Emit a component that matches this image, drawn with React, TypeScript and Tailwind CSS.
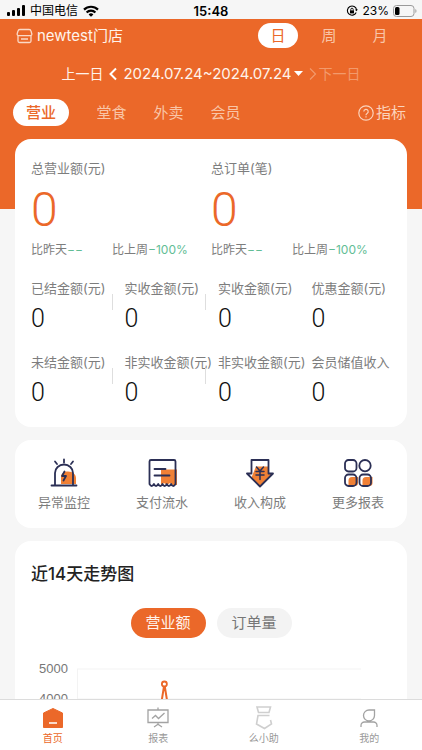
import { useState } from "react";
import type { ReactNode } from "react";

const periods = ["日", "周", "月"];
const channels = ["营业", "堂食", "外卖", "会员"];

const totals = [
  { label: "总营业额(元)", value: "0" },
  { label: "总订单(笔)", value: "0" },
];

const metrics = [
  { label: "已结金额(元)", divider: true },
  { label: "实收金额(元)", divider: true },
  { label: "实收金额(元)", divider: false },
  { label: "优惠金额(元)", divider: false },
  { label: "未结金额(元)", divider: true },
  { label: "非实收金额(元)", divider: true },
  { label: "非实收金额(元)", divider: false },
  { label: "会员储值收入", divider: false },
];

const trend = [0, 0, 0, 0, 4500, 0, 0, 0, 0, 0, 0, 0, 0, 0];
const ticks = [5000, 4000, 3000, 2000, 1000, 0];

function StatusBar() {
  return (
    <div className="grid h-[19px] shrink-0 grid-cols-3 items-center bg-[#f6f6f6] pt-[2px] text-black">
      <div className="flex items-center gap-[5px] pl-[7px]">
        <svg width="18" height="11" viewBox="0 0 18 11" fill="currentColor">
          <rect x="0" y="7" width="3" height="4" rx="1" />
          <rect x="5" y="5" width="3" height="6" rx="1" />
          <rect x="10" y="3" width="3" height="8" rx="1" />
          <rect x="15" y="0" width="3" height="11" rx="1" />
        </svg>
        <span className="text-[12px] leading-4">中国电信</span>
        <svg width="16" height="12" viewBox="0 0 16 12" fill="none" stroke="currentColor" strokeWidth="2.2">
          <path d="M1 4.6a10 10 0 0 1 14 0" />
          <path d="M3.6 7.4a6.2 6.2 0 0 1 8.8 0" />
          <path d="M8 11.8 5.6 9.4a3.4 3.4 0 0 1 4.8 0z" fill="currentColor" stroke="none" />
        </svg>
      </div>
      <div className="text-center text-[13px] leading-4 font-semibold">15:48</div>
      <div className="flex items-center justify-end gap-1 pr-[5px]">
        <svg width="12" height="12" viewBox="0 0 12 12" fill="none" stroke="currentColor" strokeWidth="1.1">
          <path d="M10.2 7.6A4.6 4.6 0 1 1 10.6 5" />
          <path d="m8.9 4.7 1.7 1.5 1.2-1.9z" fill="currentColor" stroke="none" />
          <rect x="4" y="5.4" width="4" height="3" fill="currentColor" stroke="none" />
          <path d="M4.8 5.6V4.4a1.2 1.2 0 0 1 2.4 0v1.2" strokeWidth="0.9" />
        </svg>
        <span className="text-[12px] leading-4">23%</span>
        <svg width="24" height="12" viewBox="0 0 24 12" fill="none">
          <rect x="0.5" y="0.5" width="20.5" height="11" rx="3" stroke="#9a9a9a" />
          <rect x="2" y="2" width="4.5" height="8" rx="1.5" fill="#000" />
          <path d="M22.4 4v4c1.4-.6 1.4-3.400 0-4z" fill="#9a9a9a" />
        </svg>
      </div>
    </div>
  );
}

function AlarmIcon() {
  return (
    <svg width="30" height="30" viewBox="0 0 30 30" fill="none" stroke="#2b2f55" strokeWidth="1.800" strokeLinecap="round" strokeLinejoin="round">
      <path d="M12 26V18a6.500 6.500 0 0 1 7-4.500c5 0 8 3 8 6.500v6z" fill="#f08035" stroke="none" />
      <path d="M6 26.500V15a9 8.500 0 0 1 18 0v11.500M2.500 27.500h25" />
      <path d="M15 1.500v3M6 3.500 8 6M24 3.500 22 6" />
      <path d="m15.500 13.500-2.500 4.500h4l-2.500 4.500" />
    </svg>
  );
}

function ReceiptIcon() {
  return (
    <svg width="30" height="30" viewBox="0 0 30 30" fill="none" stroke="#2b2f55" strokeWidth="1.800" strokeLinecap="round" strokeLinejoin="round">
      <path d="M14 11.500h16v15.500h-4l-3-2-3 2-3-2-3 2z" fill="#f08035" stroke="none" />
      <path d="M2.500 26V3.500a1.500 1.500 0 0 1 1.500-1.500h23a1.500 1.500 0 0 1 1.500 1.500V26q-2.200 4-4.400 0-2.200 4-4.300 0-2.200 4-4.300 0-2.200 4-4.300 0-2.200 4-4.300 0-2.200 4-4.400 0z" />
      <path d="M7.500 11h11M7.500 17.500h15" />
    </svg>
  );
}

function IncomeIcon() {
  return (
    <svg width="30" height="30" viewBox="0 0 30 30" fill="none" stroke="#2b2f55" strokeWidth="1.800" strokeLinecap="round" strokeLinejoin="round">
      <path d="M11 8.500h12.500v7h4.500L15 28.500 6 20.500z" fill="#f08035" stroke="none" />
      <path d="M6.500 2h17v13.500h4.500L15 28.500 2 15.500h4.500z" />
      <path d="m11.500 9 3.500 4 3.500-4M11 13.500h8M11 17h8M15 13v8.500" strokeWidth="1.500" />
    </svg>
  );
}

function MoreIcon() {
  return (
    <svg width="30" height="30" viewBox="0 0 30 30" fill="none" stroke="#2b2f55" strokeWidth="1.800">
      <path d="M5.500 28v-5.500a3.500 3.500 0 0 1 3.500-3.500h6V25a3 3 0 0 1-3 3zM19.500 28v-5.500a3.500 3.500 0 0 1 3.500-3.500h6.500V25a3 3 0 0 1-3 3z" fill="#f08035" stroke="none" />
      <rect x="2" y="2" width="11.500" height="11.500" rx="3.500" />
      <circle cx="22" cy="7.700" r="5.700" />
      <rect x="2" y="16.500" width="11.500" height="11.500" rx="3.500" />
      <rect x="16.500" y="16.500" width="11.500" height="11.500" rx="3.500" />
    </svg>
  );
}

const shortcuts: { label: string; icon: ReactNode }[] = [
  { label: "异常监控", icon: <AlarmIcon /> },
  { label: "支付流水", icon: <ReceiptIcon /> },
  { label: "收入构成", icon: <IncomeIcon /> },
  { label: "更多报表", icon: <MoreIcon /> },
];

const navItems: { label: string; icon: ReactNode; active?: boolean }[] = [
  {
    label: "首页",
    active: true,
    icon: (
      <svg width="24" height="24" viewBox="0 0 24 24">
        <path d="M12 2.500 21.500 7v14.500h-19V7z" fill="#eb6829" stroke="#eb6829" strokeLinejoin="round" />
        <path d="M8 17h8" stroke="#fff" strokeWidth="1.500" />
      </svg>
    ),
  },
  {
    label: "报表",
    icon: (
      <svg width="24" height="24" viewBox="0 0 24 24" fill="none" stroke="#a3a3a3" strokeWidth="1.300">
        <path d="M2 4h20v12.500H2zM12 1.500V4M12 16.500v2M8 21l4-2.700 4 2.700" />
        <path d="m6 12.500 3.500-3 3 3L18.500 7" />
      </svg>
    ),
  },
  {
    label: "么小助",
    icon: (
      <svg width="24" height="24" viewBox="0 0 24 24" fill="none" stroke="#cfcfcf" strokeWidth="1.600">
        <path d="M5 1h13.500l-1.500 5.500H6.500zM17.500 9.500H6L4.500 18l8 4.500 7-4.500-1-4" />
      </svg>
    ),
  },
  {
    label: "我的",
    icon: (
      <svg width="24" height="24" viewBox="0 0 24 24" fill="none" stroke="#a3a3a3" strokeWidth="1.300">
        <path d="M17.500 4h-5.500a5.500 5.500 0 1 0 5.500 5.500zM4 21v-1.500a3.500 3.500 0 0 1 3.500-3.500h9a3.500 3.500 0 0 1 3.500 3.500V21" />
      </svg>
    ),
  },
];

function TrendChart() {
  const width = 284;
  const height = 150;
  const points = trend.map((v, i) => [
    (i * width) / (trend.length - 1),
    height - (v / 5000) * height + 1,
  ]);
  return (
    <div className="mt-[22px] flex gap-[9px] pl-4">
      <div className="w-[37px] text-right font-['Liberation_Sans',sans-serif] text-[13px] text-[#777]">
        {ticks.map((t) => (
          <div key={t} className="h-[30px] leading-[18px]">{t}</div>
        ))}
      </div>
      <svg className="mt-2 overflow-visible" width={width} height={height + 4}>
        {ticks.map((t, i) => (
          <path key={t} d={`M0 ${i * 30 + 1}H${width}`} stroke="#f3f3f3" />
        ))}
        <path d={`M0.500 1V${height}`} stroke="#f3f3f3" />
        <polyline points={points.map((p) => p.join(",")).join(" ")} fill="none" stroke="#eb6829" strokeWidth="2" strokeLinejoin="bevel" />
        {points.map(([x, y]) => (
          <circle key={x} cx={x} cy={y} r="2.500" fill="#fff" stroke="#eb6829" strokeWidth="1.800" />
        ))}
      </svg>
    </div>
  );
}

export default function App() {
  const [period, setPeriod] = useState("日");
  const [channel, setChannel] = useState("营业");
  const [series, setSeries] = useState("营业额");

  return (
    <div className="flex h-screen flex-col bg-[#f6f6f6] font-['Inter','Noto_Sans_CJK_SC',sans-serif] text-[#7d7d7d]">
      <StatusBar />
      <main className="min-h-0 flex-1 overflow-y-auto [scrollbar-width:none]">
        <header className="bg-[#eb6829] pt-1 pb-[83px] text-[#fff3eb]">
          <div className="flex h-[25px] items-center justify-between pr-[22px] pl-4">
            <h1 className="flex items-center gap-1 text-[15px] leading-5">
              <svg width="17" height="16" viewBox="0 0 17 16" fill="none" stroke="#fbd9c6" strokeWidth="1.300">
                <path d="M4 1.500h9a2 2 0 0 1 2 1.500l.8 2.700a1.500 1.500 0 0 1-1.500 1.900H2.700a1.500 1.500 0 0 1-1.500-1.900L2 3a2 2 0 0 1 2-1.500z" />
                <path d="M2 7.600V13a1.500 1.500 0 0 0 1.500 1.500h10A1.500 1.500 0 0 0 15 13V7.600M5 11h7" />
              </svg>
              newtest门店
            </h1>
            <div className="flex items-center gap-[11px]">
              {periods.map((p) => (
                <button
                  key={p}
                  onClick={() => setPeriod(p)}
                  className={
                    p === period
                      ? "h-[25px] w-10 rounded-full bg-white text-[15px] leading-5 text-[#eb6829]"
                      : "h-[25px] w-10 rounded-full text-[15px] leading-5 text-[#f9c5a7]"
                  }
                >
                  {p}
                </button>
              ))}
            </div>
          </div>

          <div className="mt-3 flex h-[27px] items-center justify-center text-[14px] leading-5">
            <button className="flex items-center gap-[6px]">
              上一日
              <svg width="8" height="14" viewBox="0 0 8 14" fill="none" stroke="#fff" strokeWidth="2">
                <path d="M7 1.500 1.500 7 7 12.500" />
              </svg>
            </button>
            <button className="ml-[6px] flex items-center gap-[2px]">
              <span className="text-[15px]">2024.07.24~2024.07.24</span>
              <svg width="9" height="5" viewBox="0 0 9 5" fill="#fff">
                <path d="M0 0h9L4.500 5z" />
              </svg>
            </button>
            <button className="ml-[6px] flex items-center gap-[2px] text-[#f29a6c]">
              <svg width="8" height="14" viewBox="0 0 8 14" fill="none" stroke="currentColor" strokeWidth="1.200">
                <path d="M1 1.500 6.500 7 1 12.500" />
              </svg>
              下一日
            </button>
          </div>

          <div className="mt-3 flex h-[27px] items-center justify-between pr-4 pl-[13px]">
            <div className="flex items-center">
              {channels.map((c) => (
                <button
                  key={c}
                  onClick={() => setChannel(c)}
                  className={
                    c === channel
                      ? "mr-[14px] h-[27px] w-14 rounded-full bg-white text-[15px] leading-5 font-medium text-[#eb6829]"
                      : "h-[27px] w-[57px] rounded-full text-[15px] leading-5 text-[#f9c5a7]"
                  }
                >
                  {c}
                </button>
              ))}
            </div>
            <button className="flex items-center gap-[2px] text-[15px] leading-5 text-[#fbd3bc]">
              <svg width="16" height="16" viewBox="0 0 16 16" fill="none" stroke="currentColor" strokeWidth="1.200">
                <circle cx="8" cy="8" r="7.200" />
                <path d="M5.800 6.500a2.200 2.200 0 1 1 3.300 1.900c-.8.500-1.100.8-1.100 1.800M8 11.300v1.200" />
              </svg>
              指标
            </button>
          </div>
        </header>

        <div className="flex flex-col gap-[13px] px-[15px] pb-4">
          <section className="-mt-[70px] rounded-2xl bg-white pt-[18px] pr-[2px] pb-5 pl-4">
            <div className="flex">
              {totals.map((t) => (
                <div key={t.label} className="w-[180px]">
                  <h2 className="text-[13px] leading-[22px]">{t.label}</h2>
                  <p className="mt-[6px] font-['Roboto',sans-serif] text-[48px] leading-[50px] font-light text-[#eb6829]">{t.value}</p>
                  <div className="mt-[6px] flex text-[12px] leading-[18px] whitespace-nowrap">
                    <span className="w-[81px]">
                      比昨天<span className="text-[#62bd95]">−−</span>
                    </span>
                    <span>
                      比上周<span className="text-[#62bd95]">−100%</span>
                    </span>
                  </div>
                </div>
              ))}
            </div>
            <div className="mt-[19px] grid grid-cols-4 gap-y-[19px]">
              {metrics.map((m, i) => (
                <div key={i} className="flex items-center">
                  <div className="w-0 flex-1 whitespace-nowrap">
                    <h3 className="text-[13px] leading-5">{m.label}</h3>
                    <p className="mt-[7px] font-['Roboto',sans-serif] text-[25px] leading-7 font-light text-[#111]">0</p>
                  </div>
                  {m.divider && <span className="mr-3 mb-[7px] h-4 w-px bg-[#dedede]" />}
                </div>
              ))}
            </div>
          </section>

          <section className="grid grid-cols-4 rounded-2xl bg-white pt-[18px] pb-4">
            {shortcuts.map((s) => (
              <button key={s.label} className="flex flex-col items-center gap-1 text-[13px] leading-5">
                {s.icon}
                {s.label}
              </button>
            ))}
          </section>

          <section className="rounded-2xl bg-white pt-5">
            <h2 className="pl-4 text-[17px] leading-[26px] font-medium text-[#222]">近14天走势图</h2>
            <div className="mt-[21px] flex justify-center gap-[11px]">
              {["营业额", "订单量"].map((s) => (
                <button
                  key={s}
                  onClick={() => setSeries(s)}
                  className={
                    s === series
                      ? "h-[30px] w-[75px] rounded-full bg-[#eb6829] text-[15px] leading-5 text-[#fff3eb]"
                      : "h-[30px] w-[75px] rounded-full bg-[#f3f3f3] text-[15px] leading-5 text-[#777]"
                  }
                >
                  {s}
                </button>
              ))}
            </div>
            <TrendChart />
          </section>
        </div>
      </main>

      <nav className="grid h-[51px] shrink-0 grid-cols-4 border-t border-[#dcdcdc] bg-white pt-[6px]">
        {navItems.map((n) => (
          <a
            key={n.label}
            href="#"
            className={
              n.active
                ? "flex flex-col items-center text-[10px] leading-4 text-[#eb6829]"
                : "flex flex-col items-center text-[10px] leading-4 text-[#999]"
            }
          >
            {n.icon}
            {n.label}
          </a>
        ))}
      </nav>
    </div>
  );
}
